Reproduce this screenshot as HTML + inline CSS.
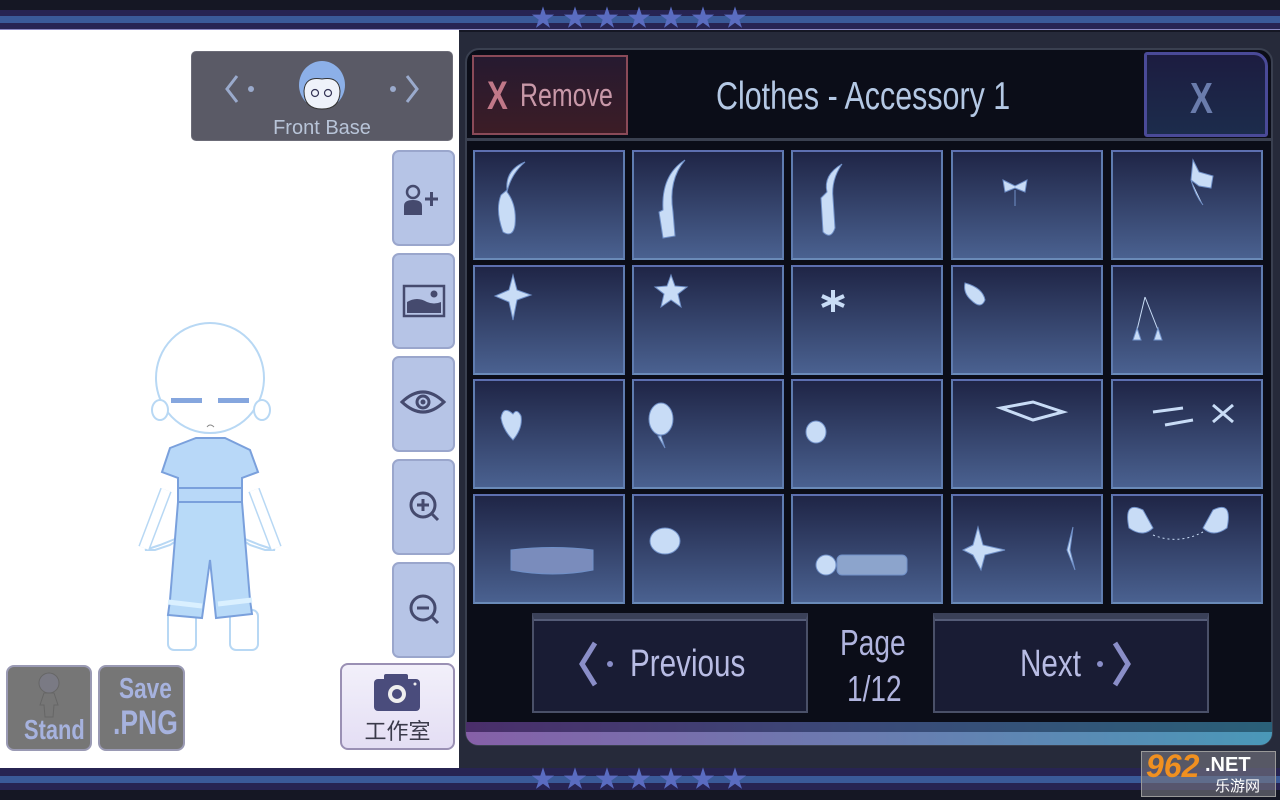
<!DOCTYPE html>
<html><head><meta charset="utf-8"><style>
*{margin:0;padding:0;box-sizing:border-box}
body{width:1280px;height:800px;overflow:hidden;position:relative;background:#262a3a;font-family:"Liberation Sans","Noto Sans CJK SC",sans-serif}
.a{position:absolute}
.n{transform:scaleX(0.78);transform-origin:left top;white-space:nowrap}
.bar{left:0;width:1280px;height:32px;background:#151724}
.stripe{left:0;width:1280px}
.stars{color:#5a6cc0;font-size:24px;letter-spacing:8px;line-height:20px}
.side{left:392px;width:63px;height:96px;background:#b6c4e6;border:2px solid #9aa6cc;border-radius:7px}
.cell{width:152px;height:110px;background:linear-gradient(#1f2546,#4a6190);border:2px solid #5d6fb0;border-bottom-color:#6a8ab8;border-left-color:#5f7cb0;border-right-color:#5f7cb0}
.pbtn{width:276px;height:100px;background:#191c34;border:2px solid #4a5068;border-top:6px solid #3a4058;box-shadow:inset 0 2px 0 #555c78}
.ptxt{color:#b8bce4;font-size:38px}
</style></head><body>
<div class="a bar" style="top:0"></div>
<div class="a stripe" style="top:10px;height:20px;background:#272452"></div>
<div class="a stripe" style="top:16px;height:7px;background:#3a5a98"></div>
<div class="a stripe" style="top:29px;height:1px;background:#8a88c0"></div>
<div class="a stars" style="left:531px;top:9px">★★★★★★★</div>
<div class="a bar" style="top:768px"></div>
<div class="a stripe" style="top:768px;height:22px;background:#272452"></div>
<div class="a stripe" style="top:776px;height:7px;background:#3a5a98"></div>
<div class="a stars" style="left:531px;top:770px">★★★★★★★</div>

<div class="a" style="left:0;top:30px;width:459px;height:738px;background:#fff"></div>

<div class="a" style="left:191px;top:51px;width:262px;height:90px;background:#5a5a66;border-radius:5px;border:1px solid #6c6c78"></div>
<svg class="a" style="left:191px;top:51px" width="262" height="90">
<path d="M46 25 L36 38 L46 51" stroke="#9aaacc" stroke-width="3" fill="none"/><circle cx="60" cy="38" r="3" fill="#9aaacc"/>
<path d="M216 25 L226 38 L216 51" stroke="#9aaacc" stroke-width="3" fill="none"/><circle cx="202" cy="38" r="3" fill="#9aaacc"/>
<ellipse cx="131" cy="34" rx="23" ry="24" fill="#8cb0e8"/>
<path d="M113 40 Q114 25 131 28 Q148 25 149 40 Q149 58 131 58 Q113 58 113 40Z" fill="#eef2fa" stroke="#333" stroke-width="1"/>
<circle cx="124" cy="42" r="3.5" fill="none" stroke="#335" stroke-width="1.2"/><circle cx="137" cy="42" r="3.5" fill="none" stroke="#335" stroke-width="1.2"/>
<text x="131" y="83" font-family="Liberation Sans" font-size="20" fill="#b8c4d8" text-anchor="middle">Front Base</text>
</svg>

<div class="a side" style="top:150px"></div>
<div class="a side" style="top:253px"></div>
<div class="a side" style="top:356px"></div>
<div class="a side" style="top:459px"></div>
<div class="a side" style="top:562px"></div>
<svg class="a" style="left:392px;top:150px" width="63" height="520" fill="#454a6e" stroke="#454a6e">
<circle cx="21" cy="42" r="6" fill="none" stroke-width="2.5"/><path d="M12 65 L12 56 Q12 50 21 50 Q30 50 30 56 L30 65Z" stroke="none"/><path d="M33 49 H46 M39.5 42 V56" stroke-width="3" fill="none"/>
<rect x="12" y="136" width="40" height="30" fill="none" stroke-width="2.5"/><path d="M15 163 L15 152 Q25 146 35 152 Q42 155 49 152 V163Z" stroke="none"/><circle cx="42" cy="144" r="3.5" stroke="none"/>
<path d="M10 252 Q31 232 52 252 Q31 272 10 252Z" fill="none" stroke-width="3"/><circle cx="31" cy="252" r="6" fill="none" stroke-width="3"/><circle cx="31" cy="252" r="2.5" stroke="none"/>
<circle cx="31" cy="355" r="12" fill="none" stroke-width="3"/><path d="M25 355 H37 M31 349 V361 M40 364 L46 370" stroke-width="3"/>
<circle cx="31" cy="458" r="12" fill="none" stroke-width="3"/><path d="M25 458 H37 M40 467 L46 473" stroke-width="3"/>
</svg>

<div class="a" style="left:340px;top:663px;width:115px;height:87px;background:linear-gradient(#f2f0fa,#e4def4);border:2px solid #9a90b4;border-radius:8px"></div>
<svg class="a" style="left:340px;top:663px" width="115" height="87"><rect x="34" y="16" width="46" height="32" rx="4" fill="#4a4c7c"/><rect x="44" y="11" width="24" height="8" rx="2" fill="#4a4c7c"/><circle cx="57" cy="31" r="9" fill="#eee"/><circle cx="57" cy="31" r="5" fill="#4a4c7c"/><circle cx="75" cy="21" r="1.5" fill="#eee"/></svg>
<div class="a" style="left:340px;top:714px;width:115px;text-align:center;font-size:22px;color:#3a3a4a">工作室</div>

<div class="a" style="left:6px;top:665px;width:86px;height:86px;background:#767676;border:2px solid #9a9ab4;border-radius:8px"></div>
<svg class="a" style="left:6px;top:665px" width="86" height="60"><circle cx="43" cy="18" r="10" fill="#7a7a84" stroke="#666" /><path d="M38 28 H48 L52 40 L48 40 L47 52 L39 52 L38 40 L34 40Z" fill="none" stroke="#666"/></svg>
<div class="a n" style="left:24px;top:714px;color:#a6b2de;font-size:28px;font-weight:bold">Stand</div>
<div class="a" style="left:98px;top:665px;width:87px;height:86px;background:#767676;border:2px solid #9a9ab4;border-radius:8px"></div>
<div class="a n" style="left:119px;top:673px;color:#a6b2de;font-size:29px;font-weight:bold">Save</div>
<div class="a n" style="left:113px;top:704px;color:#a6b2de;font-size:34px;font-weight:bold">.PNG</div>

<svg class="a" style="left:130px;top:320px" width="160" height="340">
<g stroke="#b8d8f4" stroke-width="2" fill="#fff">
<path d="M55 215 L30 225 L15 230 L25 230 L40 225 Z"/><path d="M105 215 L130 225 L145 230 L135 230 L120 225Z"/>
<path d="M36 170 L14 228 M124 170 L146 228" stroke-width="12"/><path d="M36 170 L14 228 M124 170 L146 228" stroke="#fff" stroke-width="9"/>
<rect x="38" y="290" width="28" height="40" rx="6"/><rect x="100" y="290" width="28" height="40" rx="6"/>
<ellipse cx="80" cy="58" rx="54" ry="55"/>
<ellipse cx="30" cy="90" rx="8" ry="10"/><ellipse cx="132" cy="90" rx="8" ry="10"/>
</g>
<rect x="41" y="78" width="31" height="5" fill="#85a6de"/><rect x="88" y="78" width="31" height="5" fill="#85a6de"/>
<path d="M77 107 Q80 103 84 107" stroke="#888" fill="none"/>
<path d="M40 128 L66 118 L95 118 L120 130 L128 152 L112 158 L112 170 L48 170 L48 158 L32 152 Z" fill="#b8d8f8" stroke="#7aa0dc" stroke-width="2"/>
<rect x="48" y="168" width="64" height="14" fill="#b8d8f8" stroke="#7aa0dc" stroke-width="2"/>
<path d="M48 182 L40 280 L38 295 L72 298 L80 240 L86 298 L122 294 L120 280 L112 182Z" fill="#b8daf8" stroke="#7aa0dc" stroke-width="2"/>
<path d="M38 282 L72 286 M88 284 L122 280" stroke="#daf0ff" stroke-width="5"/>
</svg>

<div class="a" style="left:465px;top:48px;width:808px;height:698px;background:#0b0d18;border:2px solid #3a4050;border-radius:14px"></div>
<div class="a" style="left:466px;top:138px;width:806px;height:3px;background:#3a4050"></div>
<div class="a" style="left:472px;top:55px;width:156px;height:80px;background:linear-gradient(#261a30,#3c1c26);border:2px solid #8a4a58"></div>
<div class="a n" style="left:487px;top:74px;color:#c07888;font-size:40px;font-weight:bold">X</div>
<div class="a n" style="left:520px;top:77px;color:#c898a8;font-size:32px">Remove</div>
<div class="a n" style="left:716px;top:75px;color:#b4c8e4;font-size:39px">Clothes - Accessory 1</div>
<div class="a" style="left:1144px;top:52px;width:124px;height:85px;background:linear-gradient(#1c1c40,#1c2c4c);border:3px solid #4a4a98;border-radius:3px 14px 3px 3px"></div>
<div class="a n" style="left:1190px;top:74px;color:#6a7cac;font-size:44px;font-weight:bold">X</div>

<div class="a" style="left:473px;top:150px;width:800px;height:460px">
<div class="a cell" style="left:0;top:0"></div><div class="a cell" style="left:159px;top:0"></div><div class="a cell" style="left:318px;top:0"></div><div class="a cell" style="left:478px;top:0"></div><div class="a cell" style="left:638px;top:0"></div>
<div class="a cell" style="left:0;top:115px"></div><div class="a cell" style="left:159px;top:115px"></div><div class="a cell" style="left:318px;top:115px"></div><div class="a cell" style="left:478px;top:115px"></div><div class="a cell" style="left:638px;top:115px"></div>
<div class="a cell" style="left:0;top:229px"></div><div class="a cell" style="left:159px;top:229px"></div><div class="a cell" style="left:318px;top:229px"></div><div class="a cell" style="left:478px;top:229px"></div><div class="a cell" style="left:638px;top:229px"></div>
<div class="a cell" style="left:0;top:344px"></div><div class="a cell" style="left:159px;top:344px"></div><div class="a cell" style="left:318px;top:344px"></div><div class="a cell" style="left:478px;top:344px"></div><div class="a cell" style="left:638px;top:344px"></div>
<svg class="a" style="left:0;top:0" width="800" height="460" fill="#c8dcf6" stroke="#7090c8">
<path d="M52 12 Q32 20 34 40 L28 45 Q22 60 30 82 Q40 88 42 75 Q44 55 34 42 Q38 24 52 12Z"/>
<path d="M212 10 Q188 25 190 60 L186 62 L190 88 L202 86 L200 62 Q195 30 212 10Z"/>
<path d="M369 14 Q350 25 354 42 L348 48 L350 82 Q358 90 362 78 L360 48 Q358 30 369 14Z"/>
<path d="M530 30 L542 36 L554 30 L552 42 L542 38 L532 42Z M542 40 V56"/>
<path d="M720 10 L726 22 L740 26 L738 38 L726 36 L718 30 Z M718 30 Q722 45 730 55"/>
<path d="M40 125 L44 140 L58 145 L44 150 L40 170 L36 152 L22 146 L36 140Z"/>
<path d="M198 125 L202 136 L214 137 L205 144 L208 157 L198 150 L188 157 L191 144 L182 137 L194 136Z"/>
<path d="M360 140 L360 162 M349 146 L371 156 M349 156 L371 146" stroke="#c8dcf6" stroke-width="4"/>
<path d="M492 133 Q510 138 512 150 Q508 160 498 150 Q490 143 492 133Z"/>
<path d="M672 147 L664 180 M672 147 L685 180" fill="none" stroke="#c8dcf6"/><path d="M664 178 L660 190 L668 190Z M685 178 L681 190 L689 190Z"/>
<path d="M40 264 Q30 255 28 268 Q30 280 40 290 Q50 278 48 266 Q44 258 40 264Z"/>
<ellipse cx="188" cy="269" rx="12" ry="16"/><path d="M185 286 L192 298 L188 286Z"/>
<ellipse cx="343" cy="282" rx="10" ry="11"/>
<path d="M528 258 L560 252 L590 262 L560 270Z" fill="none" stroke="#c8dcf6" stroke-width="3"/>
<path d="M680 262 L710 258 M692 275 L720 270 M740 255 L760 272 M760 255 L740 272" fill="none" stroke="#c8dcf6" stroke-width="3"/>
<path d="M38 400 Q80 395 120 400 L120 420 Q80 428 38 420Z" fill="#7a8cbc"/>
<ellipse cx="192" cy="391" rx="15" ry="13"/>
<circle cx="353" cy="415" r="10"/><rect x="364" y="405" width="70" height="20" rx="5" fill="#8ca4cc"/>
<path d="M505 377 L510 395 L532 400 L512 405 L508 420 L500 405 L490 400 L500 395Z"/><path d="M600 377 L594 400 L602 420 L597 400Z"/>
<path d="M670 360 Q650 350 656 378 Q670 388 680 378Z M740 360 Q760 350 754 378 Q740 388 730 378Z"/><path d="M680 385 Q705 395 730 382" fill="none" stroke="#c8dcf6" stroke-dasharray="2 3"/>
</svg>
</div>

<div class="a pbtn" style="left:532px;top:613px"></div>
<div class="a pbtn" style="left:933px;top:613px"></div>
<svg class="a" style="left:575px;top:640px" width="600" height="50" stroke="#8a8ec8" stroke-width="5" fill="#8a8ec8">
<path d="M20 3 L7 24 L20 45" fill="none"/><circle cx="35" cy="24" r="3" stroke="none"/>
<path d="M540 3 L553 24 L540 45" fill="none"/><circle cx="525" cy="24" r="3" stroke="none"/>
</svg>
<div class="a ptxt n" style="left:630px;top:643px">Previous</div>
<div class="a ptxt n" style="left:1020px;top:643px">Next</div>
<div class="a n" style="left:840px;top:620px;color:#b0b4de;font-size:36px;line-height:46px">Page</div>
<div class="a n" style="left:847px;top:666px;color:#b0b4de;font-size:36px;line-height:46px">1/12</div>

<div class="a" style="left:466px;top:722px;width:806px;height:23px;border-radius:0 0 12px 12px;background:linear-gradient(90deg,#8660a8,#6a7cb0 50%,#4a98b8)"></div>
<div class="a" style="left:466px;top:722px;width:806px;height:10px;background:linear-gradient(90deg,#4a2e6a,#3a4a78 50%,#2a6078)"></div>

<div class="a" style="left:1141px;top:751px;width:135px;height:46px;background:rgba(120,120,130,0.6);border:1px solid #999"></div>
<div class="a" style="left:1146px;top:748px;color:#f09020;font-size:32px;font-weight:bold;font-style:italic">962</div>
<div class="a" style="left:1205px;top:754px;color:#fff;font-size:20px;font-weight:bold">.NET</div>
<div class="a" style="left:1215px;top:775px;color:#fff;font-size:15px">乐游网</div>
</body></html>
